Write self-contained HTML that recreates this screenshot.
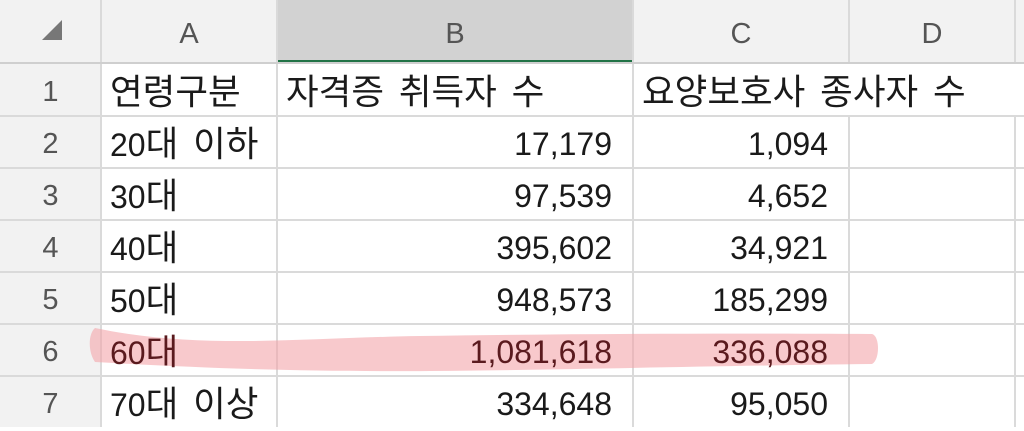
<!DOCTYPE html>
<html><head><meta charset="utf-8"><style>
body{margin:0;width:1024px;height:427px;overflow:hidden;background:#fff;font-family:"Liberation Sans","Noto Sans CJK KR",sans-serif;position:relative}
.c{position:absolute;box-sizing:border-box;font-size:32px;color:#1a1a1a;line-height:52px;white-space:nowrap}
.k{font-size:35.5px;word-spacing:5px}
.h{background:#f2f2f2;color:#555;text-align:center;font-size:29px}
.vl{position:absolute;top:0;height:427px;width:2px;background:#dadada}
.hl{position:absolute;left:0;width:1024px;height:2px;background:#dadada}
</style></head><body>
<div class="c h" style="left:0;top:0;width:1024px;height:63px"></div>
<div class="c h" style="left:0;top:63px;width:101px;height:364px"></div>
<div class="c" style="left:277px;top:0;width:356px;height:63px;background:#d2d2d2"></div>
<div style="position:absolute;left:277px;top:60px;width:356px;height:4px;background:#217346"></div>
<svg style="position:absolute;left:40px;top:18px" width="24" height="24"><polygon points="22,2 22,22 2,22" fill="#777"/></svg>
<div class="c h" style="left:101px;top:5px;width:176px;line-height:58px;background:none">A</div>
<div class="c h" style="left:277px;top:5px;width:356px;line-height:58px;background:none">B</div>
<div class="c h" style="left:633px;top:5px;width:216px;line-height:58px;background:none">C</div>
<div class="c h" style="left:849px;top:5px;width:166px;line-height:58px;background:none">D</div>
<div class="vl" style="left:100px"></div><div class="vl" style="left:276px"></div><div class="vl" style="left:632px"></div>
<div class="vl" style="left:848px;height:62px"></div><div class="vl" style="left:848px;top:116px;height:311px"></div>
<div class="vl" style="left:1014px;height:62px"></div><div class="vl" style="left:1014px;top:116px;height:311px"></div>
<div class="hl" style="top:62px;background:#cfcfcf"></div>
<div class="hl" style="top:115px"></div><div class="hl" style="top:167px"></div><div class="hl" style="top:219px"></div><div class="hl" style="top:271px"></div><div class="hl" style="top:323px"></div><div class="hl" style="top:375px"></div>
<svg style="position:absolute;left:0;top:0" width="1024" height="427"><path d="M95,328 C200,350 300,338 420,336 C560,334 700,333 872,334 C880,336 880,360 872,364 C700,366 560,370 430,371 C300,372 200,368 95,362 C88,352 88,334 95,328Z" fill="#f4a5aa" opacity="0.6"/></svg>
<div class="c h" style="left:0;top:66px;width:101px;background:none">1</div>
<div class="c h" style="left:0;top:118px;width:101px;background:none">2</div>
<div class="c h" style="left:0;top:170px;width:101px;background:none">3</div>
<div class="c h" style="left:0;top:222px;width:101px;background:none">4</div>
<div class="c h" style="left:0;top:274px;width:101px;background:none">5</div>
<div class="c h" style="left:0;top:326px;width:101px;background:none">6</div>
<div class="c h" style="left:0;top:378px;width:101px;background:none">7</div>
<div class="c k" style="left:110px;top:66px">연령구분</div>
<div class="c k" style="left:286px;top:66px">자격증 취득자 수</div>
<div class="c k" style="left:642px;top:66px">요양보호사 종사자 수</div>
<div class="c" style="left:110px;top:118px">20<span class="k">대 이하</span></div>
<div class="c" style="left:110px;top:170px">30<span class="k">대</span></div>
<div class="c" style="left:110px;top:222px">40<span class="k">대</span></div>
<div class="c" style="left:110px;top:274px">50<span class="k">대</span></div>
<div class="c" style="left:110px;top:326px;color:#5a1a1e">60<span class="k">대</span></div>
<div class="c" style="left:110px;top:378px">70<span class="k">대 이상</span></div>
<div class="c" style="right:412px;top:118px">17,179</div>
<div class="c" style="right:412px;top:170px">97,539</div>
<div class="c" style="right:412px;top:222px">395,602</div>
<div class="c" style="right:412px;top:274px">948,573</div>
<div class="c" style="right:412px;top:326px;color:#5a1a1e">1,081,618</div>
<div class="c" style="right:412px;top:378px">334,648</div>
<div class="c" style="right:196px;top:118px">1,094</div>
<div class="c" style="right:196px;top:170px">4,652</div>
<div class="c" style="right:196px;top:222px">34,921</div>
<div class="c" style="right:196px;top:274px">185,299</div>
<div class="c" style="right:196px;top:326px;color:#5a1a1e">336,088</div>
<div class="c" style="right:196px;top:378px">95,050</div>
</body></html>
